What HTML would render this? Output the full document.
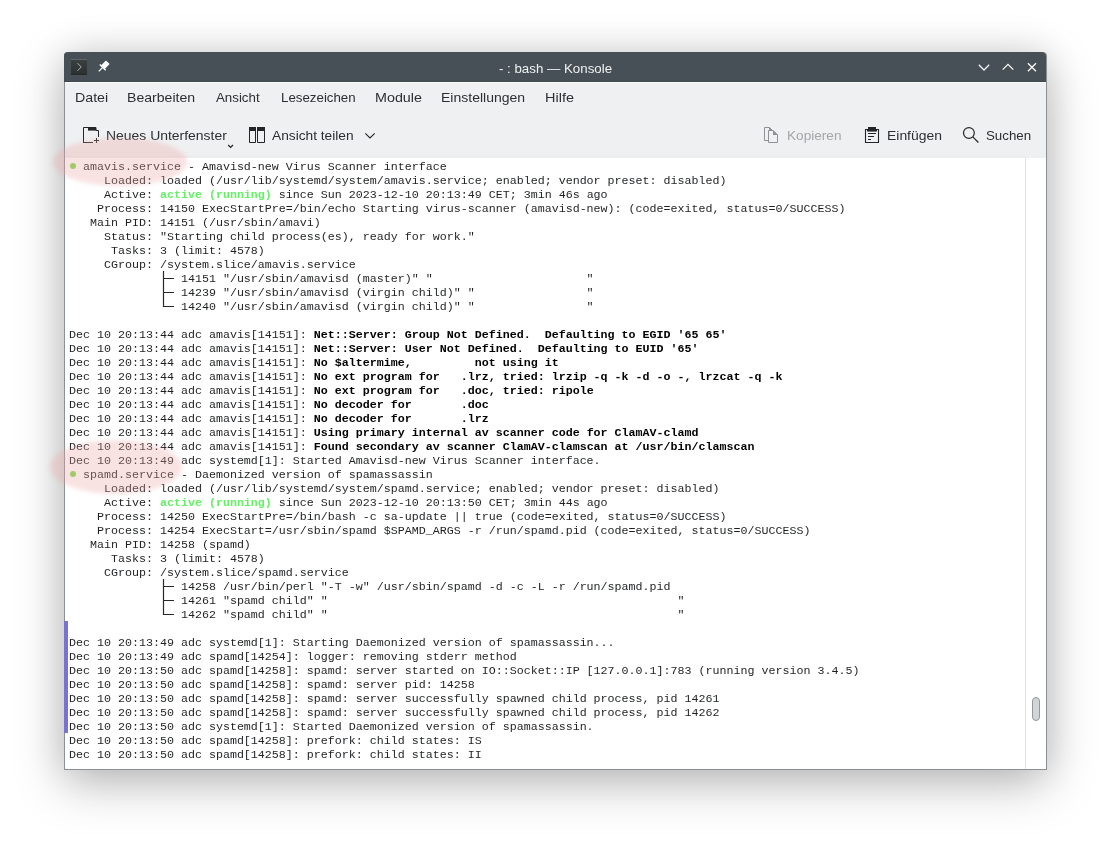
<!DOCTYPE html>
<html><head><meta charset="utf-8">
<style>
*{margin:0;padding:0;box-sizing:border-box}
html,body{width:1111px;height:846px;background:#fff;overflow:hidden;position:relative}
body{font-family:"Liberation Sans",sans-serif}
svg{position:absolute;overflow:visible}
#shadow{position:absolute;left:64px;top:52px;width:983px;height:718px;border-radius:4px 4px 0 0;
 box-shadow:0 0 36px rgba(0,0,0,0.10),0 14px 50px rgba(0,0,0,0.26)}
#win{position:absolute;left:64px;top:52px;width:983px;height:718px;background:#eff0f1;border-radius:4px 4px 0 0;
 border:1px solid #8b9095;border-top:none}
#title{position:absolute;left:64px;top:52px;width:982px;height:30px;background:#475057;border-radius:4px 4px 0 0;border-bottom:1px solid #40474d}
#ttext{will-change:transform;position:absolute;left:64px;width:983px;top:60.5px;text-align:center;color:#f0f1f2;font-size:13.3px;white-space:nowrap}
#menusep{position:absolute;left:65px;top:82px;width:981px;height:1px;background:#fafbfb}
.menu{will-change:transform;position:absolute;top:90px;font-size:13.3px;color:#2b2f33;white-space:nowrap;transform-origin:0 0}
.tb{will-change:transform;position:absolute;top:128px;font-size:13.3px;color:#2b2f33;white-space:nowrap;transform-origin:0 0}
#tbsep{position:absolute;left:65px;top:155px;width:960px;height:3px;background:#ecedee}
#tbsep2{position:absolute;left:65px;top:152px;width:960px;height:1px;background:#edeeef}
#term{position:absolute;left:65px;top:158px;width:960px;height:611px;background:#fff}
#sb{position:absolute;left:1025px;top:158px;width:21px;height:611px;background:#fff;border-left:1px solid #e2e3e4}
#handle{position:absolute;left:1032px;top:697px;width:8px;height:24px;border-radius:4px;background:#d3d4d5;border:1px solid #95989b}
#marker{position:absolute;left:64px;top:621px;width:4px;height:112px;background:#7674cc}
pre{will-change:transform;position:absolute;left:69px;top:160px;font-family:"Liberation Mono",monospace;font-size:11.67px;line-height:14px;color:#1e2022;white-space:pre}
b{font-weight:bold;color:#000}
.g{color:#64f064;font-weight:bold}
.dot{position:absolute;width:6px;height:6px;border-radius:50%;background:#7bdc4c}
.ell{position:absolute;border-radius:50%;background:rgba(238,168,168,0.33);filter:blur(2px)}
</style></head><body>
<div id="shadow"></div>
<div id="win"></div>
<div id="title"></div>
<div id="ttext">- : bash — Konsole</div>
<!-- konsole icon -->
<svg style="left:71px;top:59px" width="16" height="16">
 <defs><linearGradient id="kg" x1="0" y1="0" x2="0" y2="1"><stop offset="0" stop-color="#3b4142"/><stop offset="1" stop-color="#2b3031"/></linearGradient></defs>
 <rect x="0" y="0" width="16" height="16" fill="url(#kg)"/>
 <rect x="0" y="0" width="16" height="1" fill="#5f6668"/>
 <rect x="0" y="15" width="16" height="1" fill="#25292b"/>
 <path d="M6.5 4.2L10.2 8L6.5 11.8" stroke="#a9b0b2" stroke-width="1" fill="none"/>
</svg>
<!-- pin -->
<svg style="left:0;top:0" width="1" height="1">
 <g transform="translate(102.3 67.8) rotate(-45)" fill="#fcfcfc" stroke="#fcfcfc">
  <rect x="0.6" y="-2.6" width="7.2" height="5.2" stroke="none"/>
  <path d="M0.6 -4.2V4.2" stroke-width="1.4"/>
  <path d="M-5 0H0.6" stroke-width="1.3"/>
 </g>
</svg>
<!-- title buttons -->
<svg style="left:0;top:0" width="1" height="1">
 <path d="M978.8 64.8L984 70L989.2 64.8" stroke="#fcfcfc" stroke-width="1.25" fill="none"/>
 <path d="M1002.7 69.6L1008 64.3L1013.3 69.6" stroke="#fcfcfc" stroke-width="1.25" fill="none"/>
 <path d="M1027.9 63.2L1036 71.3M1036 63.2L1027.9 71.3" stroke="#fcfcfc" stroke-width="1.25" fill="none"/>
</svg>
<div id="menusep"></div>
<div class="menu" style="left:74.5px;transform:scaleX(1.069)">Datei</div>
<div class="menu" style="left:127.4px;transform:scaleX(1.06)">Bearbeiten</div>
<div class="menu" style="left:216.2px;transform:scaleX(1.0)">Ansicht</div>
<div class="menu" style="left:280.5px;transform:scaleX(1.0)">Lesezeichen</div>
<div class="menu" style="left:374.8px;transform:scaleX(1.076)">Module</div>
<div class="menu" style="left:441.2px;transform:scaleX(1.054)">Einstellungen</div>
<div class="menu" style="left:544.7px;transform:scaleX(1.088)">Hilfe</div>

<!-- toolbar icons -->
<svg style="left:83px;top:127px" width="16" height="16">
 <path d="M0.5 16V0.5H13V3.5H15.5V10M0 15.5H10M13.5 11V16M11 13.5H16" stroke="#232629" stroke-width="1" fill="none"/>
 <rect x="5" y="0" width="8" height="3.6" fill="#232629"/>
</svg>
<div class="tb" style="left:105.5px;transform:scaleX(1.048)">Neues Unterfenster</div>
<svg style="left:0;top:0" width="1" height="1"><path d="M228.2 145L230.6 147.4L233 145" stroke="#232629" stroke-width="1.3" fill="none"/></svg>
<svg style="left:249px;top:127px" width="16" height="16">
 <path d="M0.5 0.5H6.5V15.5H0.5ZM8.5 0.5H15.5V15.5H8.5Z" stroke="#232629" stroke-width="1" fill="none"/>
 <rect x="0" y="0" width="7" height="4" fill="#232629"/><rect x="8" y="0" width="8" height="4" fill="#232629"/>
</svg>
<div class="tb" style="left:272px;transform:scaleX(1.032)">Ansicht teilen</div>
<svg style="left:0;top:0" width="1" height="1"><path d="M365.3 133.3L370 138L374.7 133.3" stroke="#232629" stroke-width="1.1" fill="none"/></svg>

<svg style="left:763px;top:127px" width="16" height="16">
 <path d="M5.5 13.5H1.5V0.5H6.5L9.5 3.5M5.5 15.5V3.5H10L14.5 8V15.5Z" stroke="#8f9295" stroke-width="1" fill="none"/>
 <path d="M6 0L9.5 3.5H6Z M10 3L15 8H10Z" fill="#8f9295"/>
</svg>
<div class="tb" style="left:787.2px;transform:scaleX(1.023);color:#a4a6a9">Kopieren</div>
<svg style="left:864px;top:127px" width="16" height="16">
 <path d="M1.5 2.5H14.5V15.5H1.5Z" stroke="#232629" stroke-width="1.1" fill="none"/>
 <rect x="4" y="0" width="8" height="4.2" fill="#232629"/><rect x="3" y="2.5" width="10" height="2" fill="#232629"/>
 <path d="M4 6.5H12M4 9.5H10M4 12.5H7" stroke="#232629" stroke-width="1.1"/>
</svg>
<div class="tb" style="left:886.7px;transform:scaleX(1.047)">Einfügen</div>
<svg style="left:0;top:0" width="1" height="1">
 <circle cx="968.9" cy="133" r="5.4" stroke="#232629" stroke-width="1.2" fill="none"/>
 <path d="M972.8 136.9L978.4 142.5" stroke="#232629" stroke-width="1.2"/>
</svg>
<div class="tb" style="left:985.5px;transform:scaleX(1.0)">Suchen</div>
<div id="tbsep"></div><div id="tbsep2"></div>

<div id="term"></div>
<div id="sb"></div>
<div id="handle"></div>
<div id="marker"></div>
<div class="dot" style="left:69.5px;top:163.2px"></div>
<div class="dot" style="left:69.5px;top:471.2px"></div>
<pre>  amavis.service - Amavisd-new Virus Scanner interface
     Loaded: loaded (/usr/lib/systemd/system/amavis.service; enabled; vendor preset: disabled)
     Active: <span class="g">active (running)</span> since Sun 2023-12-10 20:13:49 CET; 3min 46s ago
    Process: 14150 ExecStartPre=/bin/echo Starting virus-scanner (amavisd-new): (code=exited, status=0/SUCCESS)
   Main PID: 14151 (/usr/sbin/amavi)
     Status: "Starting child process(es), ready for work."
      Tasks: 3 (limit: 4578)
     CGroup: /system.slice/amavis.service
                14151 "/usr/sbin/amavisd (master)" "                      "
                14239 "/usr/sbin/amavisd (virgin child)" "                "
                14240 "/usr/sbin/amavisd (virgin child)" "                "

Dec 10 20:13:44 adc amavis[14151]: <b>Net::Server: Group Not Defined.  Defaulting to EGID '65 65'</b>
Dec 10 20:13:44 adc amavis[14151]: <b>Net::Server: User Not Defined.  Defaulting to EUID '65'</b>
Dec 10 20:13:44 adc amavis[14151]: <b>No $altermime,         not using it</b>
Dec 10 20:13:44 adc amavis[14151]: <b>No ext program for   .lrz, tried: lrzip -q -k -d -o -, lrzcat -q -k</b>
Dec 10 20:13:44 adc amavis[14151]: <b>No ext program for   .doc, tried: ripole</b>
Dec 10 20:13:44 adc amavis[14151]: <b>No decoder for       .doc</b>
Dec 10 20:13:44 adc amavis[14151]: <b>No decoder for       .lrz</b>
Dec 10 20:13:44 adc amavis[14151]: <b>Using primary internal av scanner code for ClamAV-clamd</b>
Dec 10 20:13:44 adc amavis[14151]: <b>Found secondary av scanner ClamAV-clamscan at /usr/bin/clamscan</b>
Dec 10 20:13:49 adc systemd[1]: Started Amavisd-new Virus Scanner interface.
  spamd.service - Daemonized version of spamassassin
     Loaded: loaded (/usr/lib/systemd/system/spamd.service; enabled; vendor preset: disabled)
     Active: <span class="g">active (running)</span> since Sun 2023-12-10 20:13:50 CET; 3min 44s ago
    Process: 14250 ExecStartPre=/bin/bash -c sa-update || true (code=exited, status=0/SUCCESS)
    Process: 14254 ExecStart=/usr/sbin/spamd $SPAMD_ARGS -r /run/spamd.pid (code=exited, status=0/SUCCESS)
   Main PID: 14258 (spamd)
      Tasks: 3 (limit: 4578)
     CGroup: /system.slice/spamd.service
                14258 /usr/bin/perl "-T -w" /usr/sbin/spamd -d -c -L -r /run/spamd.pid
                14261 "spamd child" "                                                  "
                14262 "spamd child" "                                                  "

Dec 10 20:13:49 adc systemd[1]: Starting Daemonized version of spamassassin...
Dec 10 20:13:49 adc spamd[14254]: logger: removing stderr method
Dec 10 20:13:50 adc spamd[14258]: spamd: server started on IO::Socket::IP [127.0.0.1]:783 (running version 3.4.5)
Dec 10 20:13:50 adc spamd[14258]: spamd: server pid: 14258
Dec 10 20:13:50 adc spamd[14258]: spamd: server successfully spawned child process, pid 14261
Dec 10 20:13:50 adc spamd[14258]: spamd: server successfully spawned child process, pid 14262
Dec 10 20:13:50 adc systemd[1]: Started Daemonized version of spamassassin.
Dec 10 20:13:50 adc spamd[14258]: prefork: child states: IS
Dec 10 20:13:50 adc spamd[14258]: prefork: child states: II
</pre>
<svg style="left:0;top:0" width="1" height="1">
 <path d="M163.5 271V307M163 278.5H174M163 292.5H174M163 306.5H174" stroke="#26282a" stroke-width="1.2" fill="none"/>
 <path d="M163.5 579V615M163 586.5H174M163 600.5H174M163 614.5H174" stroke="#26282a" stroke-width="1.2" fill="none"/>
</svg>
<div class="ell" style="left:53px;top:138px;width:134px;height:48px"></div>
<div class="ell" style="left:50px;top:440px;width:132px;height:54px"></div>
</body></html>
